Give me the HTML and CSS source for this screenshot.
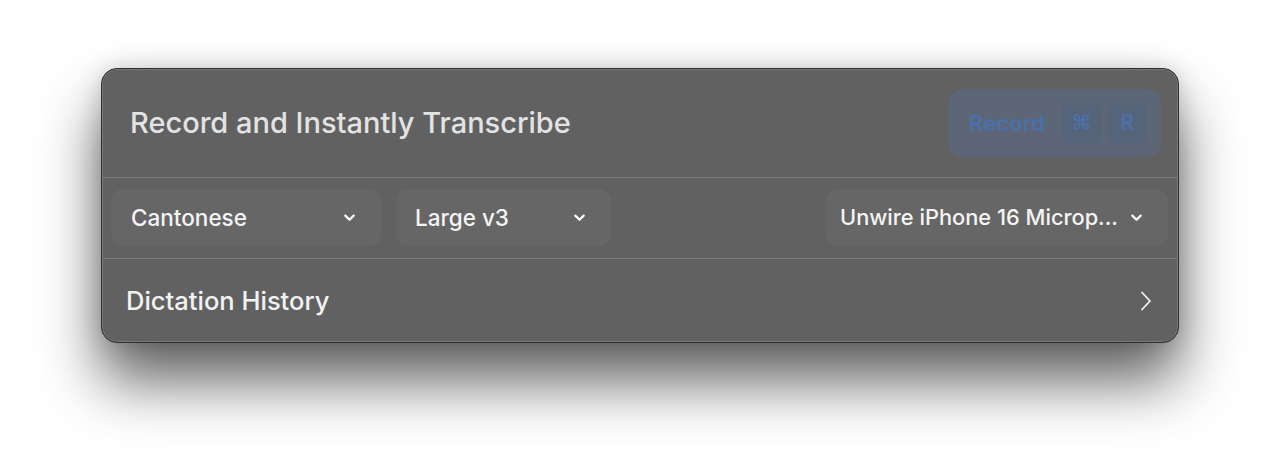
FILE: index.html
```html
<!DOCTYPE html>
<html>
<head>
<meta charset="utf-8">
<link rel="stylesheet" href="styles.css">
</head>
<body>
<div class="window">
  <div class="header">
    <div class="title">Record and Instantly Transcribe</div>
    <div class="record">
      <span class="record-label">Record</span>
      <span class="key">⌘</span>
      <span class="key">R</span>
    </div>
  </div>
  <div class="controls">
    <div class="select lang"><span>Cantonese</span>
      <svg class="chev" viewBox="0 0 14 9" width="13" height="9"><path d="M2.5 2.5 L7 7 L11.5 2.5" fill="none" stroke="#fff" stroke-width="2.4" stroke-linecap="round" stroke-linejoin="round"/></svg>
    </div>
    <div class="select model"><span>Large v3</span>
      <svg class="chev" viewBox="0 0 14 9" width="13" height="9"><path d="M2.5 2.5 L7 7 L11.5 2.5" fill="none" stroke="#fff" stroke-width="2.4" stroke-linecap="round" stroke-linejoin="round"/></svg>
    </div>
    <div class="spacer"></div>
    <div class="select mic"><span>Unwire iPhone 16 Microp...</span>
      <svg class="chev" viewBox="0 0 14 9" width="13" height="9"><path d="M2.5 2.5 L7 7 L11.5 2.5" fill="none" stroke="#fff" stroke-width="2.4" stroke-linecap="round" stroke-linejoin="round"/></svg>
    </div>
  </div>
  <div class="history">
    <span>Dictation History</span>
    <svg viewBox="0 0 12 20" width="12" height="20"><path d="M2 1.5 L10 10 L2 18.5" fill="none" stroke="#f2f2f2" stroke-width="1.8" stroke-linecap="round" stroke-linejoin="round"/></svg>
  </div>
</div>
</body>
</html>
```
FILE: styles.css
```css
html, body {
  margin: 0;
  padding: 0;
  background: #ffffff;
}
html { height: 100%; }
body {
  min-height: 476px;
  box-sizing: border-box;
  padding: 68px 0 0 101px;
  font-family: Inter, "Noto Sans", "Liberation Sans", sans-serif;
}
.window {
  width: 1078px;
  height: 275px;
  box-sizing: border-box;
  background: #616161;
  border: 1px solid #2e2e2e;
  border-radius: 16px;
  box-shadow: inset 0 0 0 1px #787878, 0 38px 60px rgba(0,0,0,0.62), 0 0 24px rgba(0,0,0,0.16);
  display: flex;
  flex-direction: column;
  overflow: hidden;
}
.header {
  height: 108px;
  display: flex;
  align-items: center;
  justify-content: space-between;
  padding: 0 17px 0 28px;
  border-bottom: 1px solid #7b7b7b;
}
.title {
  color: #e3e3e3;
  font-size: 29px;
  font-weight: 500;
  margin-top: -2px;
}
.record {
  width: 213px;
  height: 68px;
  box-sizing: border-box;
  margin-top: -1px;
  background: #5c6676;
  border-radius: 15px;
  display: flex;
  align-items: center;
  padding: 0 14px 0 21px;
  gap: 7px;
}
.record-label {
  color: #4b6fa6;
  font-size: 22px;
  font-weight: 700;
  flex: 1;
}
.key {
  width: 39px;
  height: 40px;
  border-radius: 6px;
  background: #566479;
  color: #4b6fa6;
  font-size: 21px;
  font-weight: 700;
  display: flex;
  align-items: center;
  justify-content: center;
}
.controls {
  height: 80px;
  display: flex;
  align-items: center;
  padding: 0 10px 0 9px;
  border-bottom: 1px solid #7b7b7b;
  gap: 15px;
}
.select {
  height: 57px;
  box-sizing: border-box;
  background: #666666;
  border-radius: 12px;
  display: flex;
  align-items: center;
  justify-content: space-between;
  gap: 8px;
  color: #f4f4f4;
  font-size: 22.5px;
  font-weight: 500;
  margin-top: -2px;
}
.lang { width: 270px; padding: 0 25px 0 20px; }
.model { width: 215px; padding: 0 25px 0 19px; }
.mic { width: 342px; padding: 0 25px 0 14px; font-size: 21.8px; }
.spacer { flex: 1; }
.chev { display: block; flex: none; }
.history {
  flex: 1;
  display: flex;
  align-items: center;
  justify-content: space-between;
  padding: 0 26px 0 24px;
  color: #f2f2f2;
  font-size: 25.5px;
  font-weight: 500;
}
```
